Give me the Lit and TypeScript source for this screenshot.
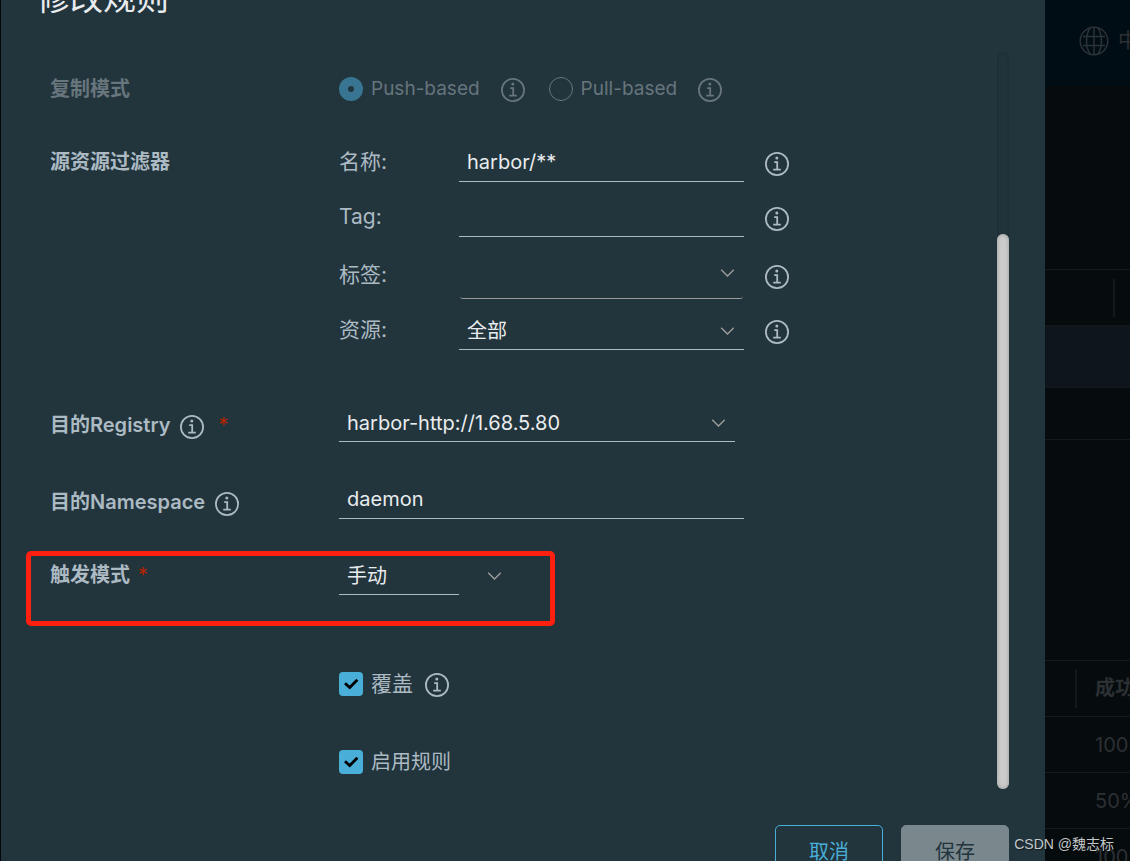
import { LitElement, html, css, svg } from "lit";
import { customElement, property } from "lit/decorators.js";

@customElement("info-icon")
export class InfoIcon extends LitElement {
  static styles = css`
    :host {
      display: block;
      flex: none;
      width: 24px;
      height: 24px;
    }
    .icon {
      display: block;
      width: 24px;
      height: 24px;
      fill: none;
      stroke: currentColor;
    }
  `;

  render() {
    return html`<svg class="icon" viewBox="0 0 24 24" aria-hidden="true">
      <circle cx="12" cy="12" r="11.1" stroke-width="1.8" />
      <circle cx="11.8" cy="6" r="1.5" fill="currentColor" stroke="none" />
      <path d="M9.2 10.2h3v7.5M8.2 17.7h7.6" stroke-width="1.8" />
    </svg>`;
  }
}

@customElement("chevron-icon")
export class ChevronIcon extends LitElement {
  static styles = css`
    :host {
      display: block;
      width: 14px;
      height: 8px;
      pointer-events: none;
      color: #9a9a9a;
    }
    .icon {
      display: block;
      width: 14px;
      height: 8px;
      fill: none;
      stroke: currentColor;
      stroke-width: 1.5;
    }
  `;

  render() {
    return html`<svg class="icon" viewBox="0 0 14 8" aria-hidden="true">
      <path d="M1.2 0.7L7.5 7L13.8 0.7" />
    </svg>`;
  }
}

@customElement("backdrop-page")
export class BackdropPage extends LitElement {
  @property({ type: Array }) rates = ["100%", "50%", "100%"];

  static styles = css`
    :host {
      display: block;
      overflow: hidden;
      background: #060b0e;
      color: #2c3033;
      font-size: 20px;
      white-space: nowrap;
    }
    .bar {
      display: flex;
      align-items: center;
      gap: 9px;
      height: 86px;
      box-sizing: border-box;
      padding: 0 0 4px 34px;
      background: #000d14;
    }
    .globe {
      flex: none;
      width: 30px;
      height: 30px;
      fill: none;
      stroke: #2c3236;
      stroke-width: 1.5;
    }
    .table {
      width: 100%;
      border-collapse: collapse;
      table-layout: fixed;
    }
    .rules {
      margin-top: 183px;
    }
    .runs {
      margin-top: 220px;
    }
    .table th,
    .table td {
      padding: 0;
      border-top: 1px solid #14191c;
      font-weight: 400;
      text-align: left;
    }
    .table .blank {
      height: 51px;
    }
    .head {
      height: 55px;
    }
    .split {
      height: 38px;
      margin-left: 30px;
      padding-left: 18px;
      border-left: 2px solid #14191c;
      line-height: 36px;
      font-weight: 700;
    }
    .rules .split {
      margin-left: 68px;
      padding: 0;
    }
    .picked {
      height: 61px;
      background: #0e151c;
    }
    .rate {
      height: 55px;
    }
    .table .rate {
      padding-left: 50px;
    }
  `;

  render() {
    return html`
      <div class="bar">
        <svg class="globe" viewBox="0 0 30 30" aria-hidden="true">
          ${svg`<circle cx="15" cy="15" r="13.8" />
          <path d="M11 2C6.400 9 6.400 21 11 28M19 2C23.600 9 23.600 21 19 28" />
          <path d="M15 1.200v27.600M4 10.500h22M4 19.500h22" />`}
        </svg>
        <span>中文简体</span>
      </div>
      <table class="table rules">
        <tr><th class="head"><div class="split"></div></th></tr>
        <tr><td class="picked"></td></tr>
        <tr><td class="blank"></td></tr>
        <tr><td></td></tr>
      </table>
      <table class="table runs">
        <tr><th class="head"><div class="split">成功率</div></th></tr>
        ${this.rates.map((r) => html`<tr><td class="rate">${r}</td></tr>`)}
      </table>
    `;
  }
}

@customElement("app-root")
export class AppRoot extends LitElement {
  static styles = css`
    :host {
      display: grid;
      grid-template-columns: 1px minmax(0, 1fr) 85px;
      position: relative;
      height: 100vh;
      overflow: hidden;
      background: #05090b;
      color: #acbac3;
      font-family: Inter, "Noto Sans CJK SC", sans-serif;
      font-size: 20px;
      line-height: 32px;
    }
    .edge {
      background: #030608;
    }
    .modal {
      margin-top: -26px;
      padding: 0 36px;
      background: #22343c;
    }
    .title {
      margin: 0 0 30px;
      font-size: 33px;
      font-weight: 400;
      line-height: 48px;
      color: #e9ecef;
    }
    .body {
      display: flex;
    }
    .form {
      flex: 1;
      min-width: 0;
      padding: 13px 0 11px 13px;
    }
    .track {
      display: flex;
      flex: none;
      width: 12px;
      flex-direction: column;
      justify-content: flex-end;
      border-radius: 6px;
      box-shadow: inset 0 0 5px #1b2b32;
    }
    .thumb {
      height: 75.3%;
      border-radius: 6px;
      background: #ccc;
      box-shadow: inset 0 0 4px #999;
    }
    .row {
      position: relative;
      display: grid;
      grid-template-columns: 289px minmax(0, 1fr);
      align-items: start;
    }
    .mode {
      align-items: center;
      min-height: 48px;
      color: #67757d;
    }
    .filters {
      margin-top: 33px;
    }
    .registry {
      margin-top: 37px;
    }
    .namespace {
      margin-top: 39px;
    }
    .trigger {
      margin-top: 38px;
    }
    .override {
      margin-top: 73px;
    }
    .enable {
      margin-top: 46px;
    }
    .name {
      display: flex;
      align-items: center;
      font-weight: 600;
    }
    .wide {
      min-height: 38px;
    }
    .wide info-icon {
      margin: 4px 0 0 10px;
    }
    .star {
      color: #b32400;
      font-weight: 400;
      margin-left: 8px;
    }
    .wide .star {
      margin-left: 14px;
    }
    .line {
      display: flex;
      align-items: center;
    }
    .mode .line {
      font-size: 19px;
    }
    .line info-icon {
      margin: 2px 24px 0 21px;
    }
    .check info-icon {
      margin: 2px 0 0 12px;
    }
    .item {
      display: grid;
      grid-template-columns: 120px minmax(0, 285px) 24px;
      align-items: start;
      height: 55px;
      font-size: 21px;
    }
    .item info-icon {
      margin: 6px 0 0 21px;
    }
    .tall {
      box-sizing: border-box;
      height: 58px;
      padding-top: 3px;
    }
    .field {
      box-sizing: border-box;
      display: block;
      width: 100%;
      height: 36px;
      margin: 0;
      padding: 0 8px 4px;
      border: 0;
      border-bottom: 1px solid #acbac3;
      border-radius: 0;
      outline: 0;
      appearance: none;
      background: none;
      color: #e9ecef;
      font: inherit;
      font-size: 20px;
    }
    .pick {
      display: grid;
      align-items: center;
    }
    .pick .field,
    .pick chevron-icon {
      grid-area: 1 / 1;
    }
    .pick .field {
      padding-bottom: 2px;
    }
    .pick chevron-icon {
      justify-self: end;
      margin: 0 10px 3px 0;
    }
    .tall .field {
      height: 40px;
      width: auto;
      margin: 0 1px;
      border-color: #9a9a9a;
      border-radius: 3px;
    }
    .tall .pick chevron-icon {
      margin-bottom: 12px;
    }
    .medium {
      max-width: 396px;
    }
    .long {
      max-width: 405px;
    }
    .short {
      max-width: 172px;
    }
    .short .field {
      width: 120px;
    }
    .choice {
      box-sizing: border-box;
      flex: none;
      width: 24px;
      height: 24px;
      margin: 0 8px 0 0;
      appearance: none;
      border: 1px solid #67757d;
      border-radius: 50%;
    }
    .choice:checked {
      border: 9px solid #387592;
    }
    .tick {
      display: grid;
      flex: none;
      margin-right: 8px;
    }
    .tick .box,
    .tick .mark {
      grid-area: 1 / 1;
      width: 24px;
      height: 24px;
      margin: 0;
    }
    .box {
      appearance: none;
      border-radius: 4px;
      background: #49afd9;
    }
    .mark {
      fill: none;
      stroke: #000;
      stroke-width: 2.8;
      pointer-events: none;
    }
    .large {
      font-size: 21px;
    }
    .highlight {
      position: absolute;
      top: -8px;
      left: -24px;
      width: 519px;
      height: 65px;
      border: 5px solid #ff2010;
      border-radius: 5px;
      pointer-events: none;
    }
    .footer {
      display: flex;
      justify-content: flex-end;
      gap: 18px;
      margin-top: 36px;
    }
    .button {
      box-sizing: border-box;
      width: 108px;
      height: 54px;
      padding: 0;
      border: 1px solid #49afd9;
      border-radius: 5px;
      background: none;
      color: #49afd9;
      font: inherit;
    }
    .save {
      border-color: #7a878c;
      background: #7a878c;
      color: #22343c;
    }
    .watermark {
      position: absolute;
      right: 16px;
      bottom: 5px;
      color: #c3c8ca;
      font-family: "Liberation Sans", "Noto Sans CJK SC", sans-serif;
      font-size: 14px;
      line-height: 24px;
      text-shadow: 1px 1px 1px #0008;
    }
  `;

  private tick(id: string) {
    return html`<span class="tick">
      <input class="box" type="checkbox" id=${id} checked />
      <svg class="mark" viewBox="0 0 24 24" aria-hidden="true">
        <path d="M6 11.2L10.7 15.6L18.4 7.8" />
      </svg>
    </span>`;
  }

  render() {
    return html`
      <div class="edge"></div>
      <section class="modal" role="dialog" aria-labelledby="title">
        <h1 class="title" id="title">修改规则</h1>
        <div class="body">
          <form class="form">
            <div class="row mode">
              <span class="name">复制模式</span>
              <div class="line">
                <input class="choice" type="radio" name="mode" id="push" checked disabled />
                <label for="push">Push-based</label>
                <info-icon></info-icon>
                <input class="choice" type="radio" name="mode" id="pull" disabled />
                <label for="pull">Pull-based</label>
                <info-icon></info-icon>
              </div>
            </div>
            <div class="row filters">
              <span class="name">源资源过滤器</span>
              <div>
                <div class="item">
                  <label for="name">名称:</label>
                  <input class="field" id="name" type="text" value="harbor/**" />
                  <info-icon></info-icon>
                </div>
                <div class="item">
                  <label for="tag">Tag:</label>
                  <input class="field" id="tag" type="text" />
                  <info-icon></info-icon>
                </div>
                <div class="item tall">
                  <label for="label">标签:</label>
                  <div class="pick">
                    <select class="field" id="label"><option></option></select>
                    <chevron-icon></chevron-icon>
                  </div>
                  <info-icon></info-icon>
                </div>
                <div class="item">
                  <label for="resource">资源:</label>
                  <div class="pick">
                    <select class="field" id="resource"><option>全部</option></select>
                    <chevron-icon></chevron-icon>
                  </div>
                  <info-icon></info-icon>
                </div>
              </div>
            </div>
            <div class="row registry">
              <label class="name wide" for="registry">目的Registry<info-icon></info-icon><span class="star">*</span></label>
              <div class="pick medium">
                <select class="field" id="registry"><option>harbor-http://1.68.5.80</option></select>
                <chevron-icon></chevron-icon>
              </div>
            </div>
            <div class="row namespace">
              <label class="name wide" for="namespace">目的Namespace<info-icon></info-icon></label>
              <input class="field long" id="namespace" type="text" value="daemon" />
            </div>
            <div class="row trigger">
              <label class="name" for="trigger">触发模式<span class="star">*</span></label>
              <div class="pick short">
                <select class="field" id="trigger"><option>手动</option></select>
                <chevron-icon></chevron-icon>
              </div>
              <div class="highlight"></div>
            </div>
            <div class="row override">
              <span></span>
              <div class="line check large">
                ${this.tick("override")}
                <label for="override">覆盖</label>
                <info-icon></info-icon>
              </div>
            </div>
            <div class="row enable">
              <span></span>
              <div class="line check">
                ${this.tick("enable")}
                <label for="enable">启用规则</label>
              </div>
            </div>
          </form>
          <div class="track"><div class="thumb"></div></div>
        </div>
        <div class="footer">
          <button class="button" type="button">取消</button>
          <button class="button save" type="button">保存</button>
        </div>
      </section>
      <backdrop-page></backdrop-page>
      <div class="watermark">CSDN @魏志标</div>
    `;
  }
}
